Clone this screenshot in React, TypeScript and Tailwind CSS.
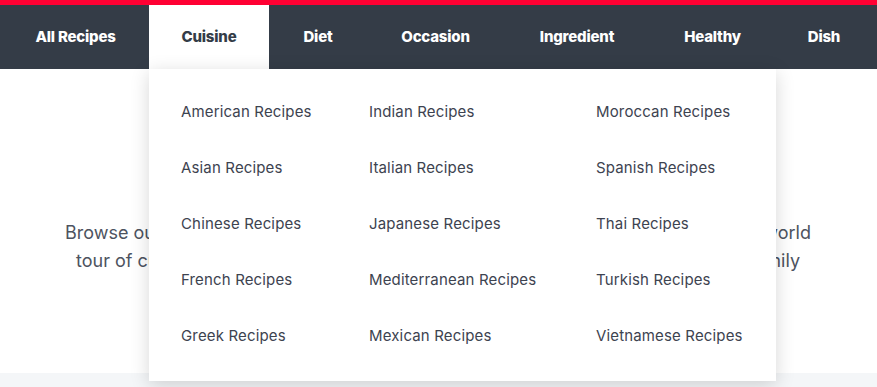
import React from 'react';

const navItems = [
    { label: 'All Recipes', w: 'w-[147px]' },
    { label: 'Cuisine', w: 'w-[120px]', active: true },
    { label: 'Diet', w: 'w-[98px]' },
    { label: 'Occasion', w: 'w-[137px]' },
    { label: 'Ingredient', w: 'w-[146px]' },
    { label: 'Healthy', w: 'w-[125px]' },
    { label: 'Dish', w: 'w-[98px]' },
];

const cuisineColumns = [
    ['American Recipes', 'Asian Recipes', 'Chinese Recipes', 'French Recipes', 'Greek Recipes'],
    ['Indian Recipes', 'Italian Recipes', 'Japanese Recipes', 'Mediterranean Recipes', 'Mexican Recipes'],
    ['Moroccan Recipes', 'Spanish Recipes', 'Thai Recipes', 'Turkish Recipes', 'Vietnamese Recipes'],
];

const CuisineMenu: React.FC = () => (
    <div className="absolute left-0 top-full z-20 w-[627px] bg-white pt-[15px] pb-[17px] pl-[32px] font-normal tracking-[0.15px] shadow-[0_4px_18px_rgba(0,0,0,0.16)]">
        <div className="grid grid-cols-[188px_227px_1fr]">
            {cuisineColumns.map((col, i) => (
                <ul key={i} className="flex flex-col">
                    {col.map((item) => (
                        <li key={item} className="h-[56px] flex items-center text-[15px] text-[#3d4350] whitespace-nowrap">
                            {item}
                        </li>
                    ))}
                </ul>
            ))}
        </div>
    </div>
);

export default function App() {
    return (
        <div className="w-[877px] h-[387px] overflow-hidden bg-[#f4f6f8]" style={{ fontFamily: 'Inter, "Open Sans", sans-serif' }}>
            <div className="h-[5px] bg-[#ff0033]" />
            <nav className="relative z-10 h-[64px] bg-[#343c47] flex pl-[2px]">
                {navItems.map((item) => (
                    <div
                        key={item.label}
                        className={`${item.w} relative flex items-center justify-center text-[15px] font-extrabold tracking-[-0.2px] ${item.active ? 'bg-white text-[#343c47]' : 'text-white'}`}
                    >
                        {item.label}
                        {item.active && <CuisineMenu />}
                    </div>
                ))}
            </nav>
            <section className="h-[304px] bg-white flex flex-col pt-[150px] text-[18px] leading-[28px] text-[#4d5360] whitespace-nowrap">
                <p className="ml-[65px] w-[746px] flex justify-between">
                    <span>Browse our collection of international recipes</span>
                    <span>and take a culinary world</span>
                </p>
                <p className="ml-[76px] w-[724px] flex justify-between">
                    <span>tour of cuisines with dishes</span>
                    <span>to suit the whole family</span>
                </p>
            </section>
        </div>
    );
}
